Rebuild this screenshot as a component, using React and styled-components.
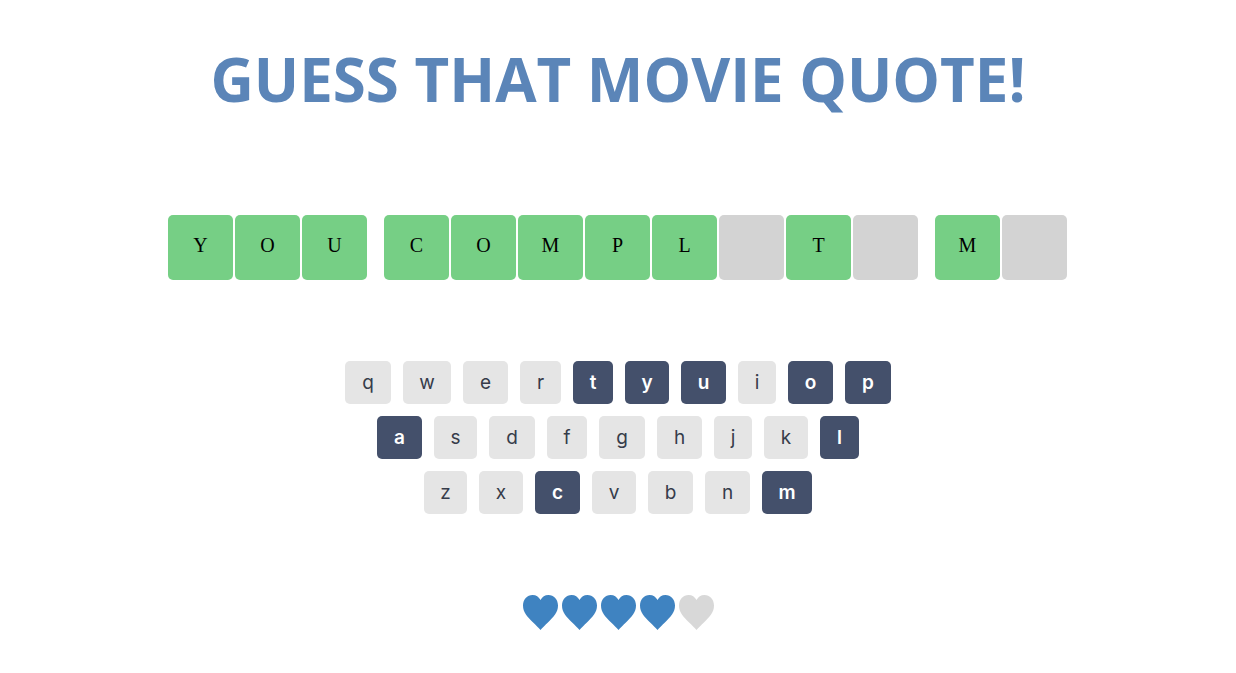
import styled, { createGlobalStyle } from "styled-components";

const GlobalStyle = createGlobalStyle`
  html, body {
    margin: 0;
    padding: 0;
    background: #fff;
  }
`;

const words = [
  ["Y", "O", "U"],
  ["C", "O", "M", "P", "L", "", "T", ""],
  ["M", ""],
];

// widths measured per key, the original font is a bit wider than Inter
const keyRows = [
  [["q", 46], ["w", 48], ["e", 45], ["r", 41], ["t", 40, true], ["y", 44, true], ["u", 45, true], ["i", 38], ["o", 45, true], ["p", 46, true]],
  [["a", 45, true], ["s", 43], ["d", 46], ["f", 40], ["g", 46], ["h", 45], ["j", 38], ["k", 44], ["l", 39, true]],
  [["z", 43], ["x", 44], ["c", 45, true], ["v", 44], ["b", 45], ["n", 45], ["m", 50, true]],
];

const lives = [true, true, true, true, false];

const App = () => {
  return (
    <Page>
      <GlobalStyle />
      <Title>GUESS THAT MOVIE QUOTE!</Title>
      <Quote>
        {words.map((word, i) => (
          <Word key={i}>
            {word.map((letter, j) => (
              <Tile key={j} $found={letter !== ""}>
                {letter}
              </Tile>
            ))}
          </Word>
        ))}
      </Quote>
      <Keyboard>
        {keyRows.map((row, i) => (
          <KeyRow key={i}>
            {row.map(([letter, width, used]) => (
              <Key key={letter} $width={width} $used={used}>
                {letter}
              </Key>
            ))}
          </KeyRow>
        ))}
      </Keyboard>
      <Lives>
        {lives.map((alive, i) => (
          <Heart key={i} $alive={alive} viewBox="0 0 35 35">
            <path d="M17.5 35C15.6 32.6 13 30.2 9.6 26.9 4.2 21.7 0 17.4 0 10.6 0 4.5 4.2 0 9.6 0 13 0 15.9 1.9 17.5 5 19.1 1.9 22 0 25.4 0 30.8 0 35 4.5 35 10.6 35 17.4 30.8 21.7 25.4 26.9 22 30.2 19.4 32.6 17.5 35Z" />
          </Heart>
        ))}
      </Lives>
    </Page>
  );
};

export default App;

const Page = styled.main`
  display: flex;
  flex-direction: column;
  align-items: center;
  height: 673px;
  overflow: hidden;
`;

const Title = styled.h1`
  margin: 38px 0 0;
  font-family: "Open Sans", sans-serif;
  font-size: 60px;
  line-height: 82px;
  font-weight: 700;
  color: #5b85b8;
`;

const Quote = styled.section`
  display: flex;
  gap: 17px;
  margin-top: 95px;
  padding-right: 1px;
`;

const Word = styled.div`
  display: flex;
  gap: 2px;
`;

const Tile = styled.div`
  display: flex;
  align-items: center;
  justify-content: center;
  width: 65px;
  height: 61px;
  padding-bottom: 4px;
  border-radius: 5px;
  background: ${(p) => (p.$found ? "#76cf85" : "#d3d3d3")};
  font-family: "Liberation Serif", serif;
  font-size: 20px;
  color: #000;
`;

const Keyboard = styled.section`
  display: flex;
  flex-direction: column;
  gap: 12px;
  margin-top: 81px;
`;

const KeyRow = styled.div`
  display: flex;
  justify-content: center;
  gap: 12px;
`;

const Key = styled.div`
  display: flex;
  align-items: center;
  justify-content: center;
  width: ${(p) => p.$width}px;
  height: 43px;
  border-radius: 5px;
  background: ${(p) => (p.$used ? "#44506b" : "#e5e5e5")};
  font-family: Inter, sans-serif;
  font-size: 19px;
  font-weight: ${(p) => (p.$used ? 600 : 400)};
  color: ${(p) => (p.$used ? "#fff" : "#363c4a")};
`;

const Lives = styled.section`
  display: flex;
  gap: 4px;
  margin-top: 81px;
`;

const Heart = styled.svg`
  width: 35px;
  height: 35px;
  fill: ${(p) => (p.$alive ? "#3f83c1" : "#d8d8d8")};
`;
